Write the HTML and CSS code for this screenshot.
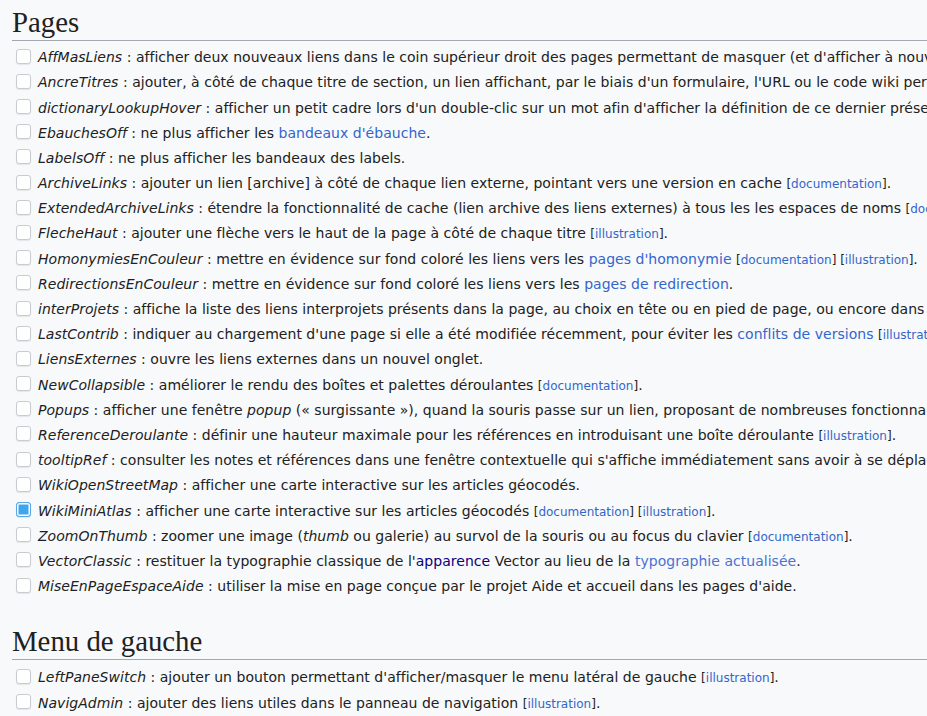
FILE: index.html
```html
<!DOCTYPE html>
<html lang="fr">
<head>
<meta charset="utf-8">
<title>Gadgets</title>
<link rel="stylesheet" href="styles.css">
</head>
<body>
<div class="page">
  <section class="section">
    <h2 class="heading">Pages</h2>
    <ul class="list">
      <li class="row"><input type="checkbox" class="cb"><span class="txt"><i>AffMasLiens</i> : afficher deux nouveaux liens dans le coin supérieur droit des pages permettant de masquer (et d'afficher à nouveau) les liens d'édition de sections.</span></li>
      <li class="row"><input type="checkbox" class="cb"><span class="txt"><i>AncreTitres</i> : ajouter, à côté de chaque titre de section, un lien affichant, par le biais d'un formulaire, l'URL ou le code wiki permettant d'y accéder.</span></li>
      <li class="row"><input type="checkbox" class="cb"><span class="txt"><i>dictionaryLookupHover</i> : afficher un petit cadre lors d'un double-clic sur un mot afin d'afficher la définition de ce dernier présente sur le Wiktionnaire.</span></li>
      <li class="row"><input type="checkbox" class="cb"><span class="txt"><i>EbauchesOff</i> : ne plus afficher les <a class="link" href="#">bandeaux d'ébauche</a>.</span></li>
      <li class="row"><input type="checkbox" class="cb"><span class="txt"><i>LabelsOff</i> : ne plus afficher les bandeaux des labels.</span></li>
      <li class="row"><input type="checkbox" class="cb"><span class="txt"><i>ArchiveLinks</i> : ajouter un lien [archive] à côté de chaque lien externe, pointant vers une version en cache <span class="small">[<a class="link" href="#">documentation</a>]</span>.</span></li>
      <li class="row"><input type="checkbox" class="cb"><span class="txt"><i>ExtendedArchiveLinks</i> : étendre la fonctionnalité de cache (lien archive des liens externes) à tous les les espaces de noms <span class="small">[<a class="link" href="#">documentation</a>]</span>.</span></li>
      <li class="row"><input type="checkbox" class="cb"><span class="txt"><i>FlecheHaut</i> : ajouter une flèche vers le haut de la page à côté de chaque titre <span class="small">[<a class="link" href="#">illustration</a>]</span>.</span></li>
      <li class="row"><input type="checkbox" class="cb"><span class="txt"><i>HomonymiesEnCouleur</i> : mettre en évidence sur fond coloré les liens vers les <a class="link" href="#">pages d'homonymie</a> <span class="small">[<a class="link" href="#">documentation</a>] [<a class="link" href="#">illustration</a>]</span>.</span></li>
      <li class="row"><input type="checkbox" class="cb"><span class="txt"><i>RedirectionsEnCouleur</i> : mettre en évidence sur fond coloré les liens vers les <a class="link" href="#">pages de redirection</a>.</span></li>
      <li class="row"><input type="checkbox" class="cb"><span class="txt"><i>interProjets</i> : affiche la liste des liens interprojets présents dans la page, au choix en tête ou en pied de page, ou encore dans la barre latérale.</span></li>
      <li class="row"><input type="checkbox" class="cb"><span class="txt"><i>LastContrib</i> : indiquer au chargement d'une page si elle a été modifiée récemment, pour éviter les <a class="link" href="#">conflits de versions</a> <span class="small">[<a class="link" href="#">illustration</a>]</span>.</span></li>
      <li class="row"><input type="checkbox" class="cb"><span class="txt"><i>LiensExternes</i> : ouvre les liens externes dans un nouvel onglet.</span></li>
      <li class="row"><input type="checkbox" class="cb"><span class="txt"><i>NewCollapsible</i> : améliorer le rendu des boîtes et palettes déroulantes <span class="small">[<a class="link" href="#">documentation</a>]</span>.</span></li>
      <li class="row"><input type="checkbox" class="cb"><span class="txt"><i>Popups</i> : afficher une fenêtre <i>popup</i> (« surgissante »), quand la souris passe sur un lien, proposant de nombreuses fonctionnalités d'édition.</span></li>
      <li class="row"><input type="checkbox" class="cb"><span class="txt"><i>ReferenceDeroulante</i> : définir une hauteur maximale pour les références en introduisant une boîte déroulante <span class="small">[<a class="link" href="#">illustration</a>]</span>.</span></li>
      <li class="row"><input type="checkbox" class="cb"><span class="txt"><i>tooltipRef</i> : consulter les notes et références dans une fenêtre contextuelle qui s'affiche immédiatement sans avoir à se déplacer en bas de page.</span></li>
      <li class="row"><input type="checkbox" class="cb"><span class="txt"><i>WikiOpenStreetMap</i> : afficher une carte interactive sur les articles géocodés.</span></li>
      <li class="row"><input type="checkbox" class="cb" checked><span class="txt"><i>WikiMiniAtlas</i> : afficher une carte interactive sur les articles géocodés <span class="small">[<a class="link" href="#">documentation</a>] [<a class="link" href="#">illustration</a>]</span>.</span></li>
      <li class="row"><input type="checkbox" class="cb"><span class="txt"><i>ZoomOnThumb</i> : zoomer une image (<i>thumb</i> ou galerie) au survol de la souris ou au focus du clavier <span class="small">[<a class="link" href="#">documentation</a>]</span>.</span></li>
      <li class="row"><input type="checkbox" class="cb"><span class="txt"><i>VectorClassic</i> : restituer la typographie classique de l'<a class="link visited" href="#">apparence</a> Vector au lieu de la <a class="link light" href="#">typographie actualisée</a>.</span></li>
      <li class="row"><input type="checkbox" class="cb"><span class="txt"><i>MiseEnPageEspaceAide</i> : utiliser la mise en page conçue par le projet Aide et accueil dans les pages d'aide.</span></li>
    </ul>
  </section>
  <section class="section">
    <h2 class="heading">Menu de gauche</h2>
    <ul class="list">
      <li class="row"><input type="checkbox" class="cb"><span class="txt"><i>LeftPaneSwitch</i> : ajouter un bouton permettant d'afficher/masquer le menu latéral de gauche <span class="small">[<a class="link" href="#">illustration</a>]</span>.</span></li>
      <li class="row"><input type="checkbox" class="cb"><span class="txt"><i>NavigAdmin</i> : ajouter des liens utiles dans le panneau de navigation <span class="small">[<a class="link" href="#">illustration</a>]</span>.</span></li>
    </ul>
  </section>
</div>
</body>
</html>
```

FILE: styles.css
```css
html, body {
  margin: 0;
  padding: 0;
  background: #f8f9fa;
  overflow: hidden;
}

body {
  font-family: "DejaVu Sans", sans-serif;
  font-size: 14px;
  color: #202122;
}

.page {
  padding-left: 12px;
  width: 1400px;
}

.section + .section {
  margin-top: 25.5px;
}

.heading {
  margin: 5px 0 0 0;
  padding: 0;
  font-family: "Liberation Serif", "DejaVu Serif", serif;
  font-weight: normal;
  font-size: 28.8px;
  line-height: 1.2;
  border-bottom: 1px solid #a2a9b1;
  width: 915px;
}

.list {
  list-style: none;
  margin: 4px 0 0 0;
  padding: 0;
}

.section + .section .list {
  margin-top: 5px;
}

.row {
  display: flex;
  align-items: center;
  height: 25.2px;
  white-space: nowrap;
  letter-spacing: 0.03px;
}

.cb {
  appearance: none;
  -webkit-appearance: none;
  box-sizing: border-box;
  width: 15px;
  height: 15px;
  margin: 0 7px 0 4px;
  flex: none;
  background: #fff;
  border: 1px solid #c8ccd1;
  border-radius: 3px;
  box-shadow: 0 1px 1px rgba(0, 0, 0, 0.08);
  position: relative;
  top: -1px;
}

.cb:checked {
  border-color: #58a8e8;
  background: #3ea6ea;
  box-shadow: inset 0 0 0 1.5px #fff, 0 1px 1px rgba(0, 0, 0, 0.08);
}

.txt i {
  font-style: italic;
}

.small {
  font-size: 12px;
  letter-spacing: 0;
}

.link {
  color: #3366cc;
  text-decoration: none;
}

.link.visited {
  color: #0b0080;
}

.link.light {
  color: #4a72d2;
}
```
